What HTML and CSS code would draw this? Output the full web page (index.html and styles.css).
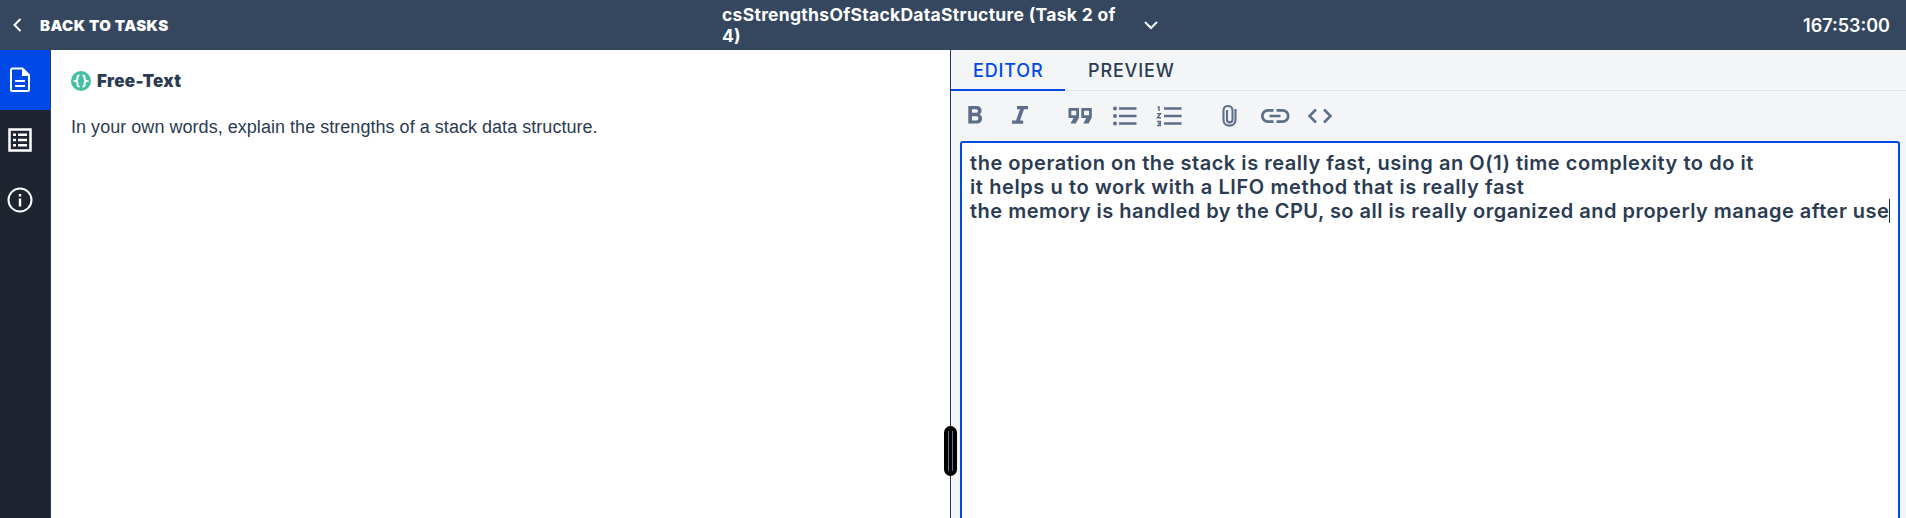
FILE: index.html
```html
<!DOCTYPE html>
<html lang="en">
<head>
<meta charset="utf-8">
<title>csStrengthsOfStackDataStructure</title>
<link rel="stylesheet" href="styles.css">
</head>
<body>
<div class="app">
  <header class="topbar">
    <a class="back">
      <svg class="back-icon" width="10" height="16" viewBox="0 0 10 16"><path d="M8.500 2 2.500 8l6 6" fill="none" stroke="#fff" stroke-width="2"/></svg>
      <span class="back-label">BACK TO TASKS</span>
    </a>
    <div class="task-picker">
      <div class="task-name"><span class="task-line">csStrengthsOfStackDataStructure (Task 2 of</span> <span class="task-rest">4)</span></div>
      <svg width="16" height="10" viewBox="0 0 16 10"><path d="m2 2 6 6 6-6" fill="none" stroke="#fff" stroke-width="2"/></svg>
    </div>
    <div class="timer">167:53:00</div>
  </header>
  <main class="workspace">
    <nav class="rail">
      <a class="rail-item active"><svg width="40" height="60" viewBox="0 0 40 60"><path d="M12.500 18.500h10l6.500 6.500v14.500a1.500 1.500 0 0 1-1.500 1.500h-15a1.500 1.500 0 0 1-1.500-1.500V20a1.500 1.500 0 0 1 1.500-1.500z" fill="none" stroke="#fff" stroke-width="2"/><path d="M22 18v8h8zM15 30h10v2H15zM15 35h10v2H15z" fill="#fff"/></svg></a>
      <a class="rail-item"><svg width="40" height="60" viewBox="0 0 40 60"><rect x="9.500" y="19.500" width="21" height="21" fill="none" stroke="#fff" stroke-width="2.500"/><path d="M13 23.500h3v2.500h-3zM18 23.500h9v2.500h-9zM13 28.700h3v2.500h-3zM18 28.700h9v2.500h-9zM13 34h3v2.500h-3zM18 34h9v2.500h-9z" fill="#fff"/></svg></a>
      <a class="rail-item"><svg width="40" height="60" viewBox="0 0 40 60"><circle cx="20" cy="30" r="11.500" fill="none" stroke="#fff" stroke-width="2"/><path d="M18.800 24h2.400v2.400h-2.400zM18.800 28.500h2.400v8h-2.400z" fill="#fff"/></svg></a>
    </nav>
    <section class="prompt">
      <div class="prompt-head">
        <svg width="20" height="20" viewBox="0 0 20 20"><circle cx="10" cy="10" r="10" fill="#45bfa1"/><path d="M8.500 4.500C6 4.500 6.500 6 6.500 7.500S6 9.500 4.500 10c1.500.5 2 1 2 2.500s-.5 3 2 3M11.500 4.500c2.500 0 2 1.500 2 3s.5 2 2 2.500c-1.500.5-2 1-2 2.500s.5 3-2 3" fill="none" stroke="#fff" stroke-width="2"/></svg>
        <h1 class="prompt-title">Free-Text</h1>
      </div>
      <p class="prompt-text">In your own words, explain the strengths of a stack data structure.</p>
    </section>
    <section class="editor">
      <div class="tabs"><a class="tab tab-editor">EDITOR</a><a class="tab tab-preview">PREVIEW</a></div>
      <div class="toolbar">
        <svg width="400" height="50" viewBox="951 91 400 50" fill="#5d6f88">
          <path fill-rule="evenodd" d="M968.300 106h8.300c3.200 0 5 1.800 5 4.500 0 1.800-.8 3-2 3.800 1.500.8 2.500 2.200 2.500 4.100 0 3.100-2.100 5.200-5.300 5.200h-8.500zM972 109.200v3.600h4c2.600 0 2.600-3.600 0-3.600zM972 116.200v4.200h4.300c2.800 0 2.800-4.200 0-4.200z"/>
          <path d="M1017 106h11v3.200h-4l-4 11.300h3.200v3.200H1012v-3.200h4l4-11.300h-3z"/>
          <path fill-rule="evenodd" d="M1068.500 108h10.500v9.500l-3.200 6h-5.300l3-5.500h-5zM1071.300 110.800v4.500h4.900v-4.500zM1081.300 108h10.500v9.500l-3.200 6h-5.300l3-5.500h-5zM1084.100 110.800v4.500h4.900v-4.500z"/>
          <circle cx="1115" cy="108.500" r="2"/><circle cx="1115" cy="116" r="2"/><circle cx="1115" cy="123.500" r="2"/>
          <path d="M1119 107.300h17.500v2.500H1119zM1119 114.800h17.500v2.500H1119zM1119 122.300h17.500v2.500H1119zM1164 107.300h17.500v2.500H1164zM1164 114.800h17.500v2.500H1164zM1164 122.300h17.500v2.500H1164z"/>
          <path d="M1157.500 107h1.500v4M1157 113.800h3.500l-3 4h3.500M1157 121.500h3.300v4H1157M1158 123.500h2.300" fill="none" stroke="#5d6f88" stroke-width="1.500"/>
          <path d="M1235.500 109v11c0 7.500-12 7.500-12 0v-9.500c0-6 9-6 9 0v9c0 3.800-5.500 3.800-5.500 0V110" fill="none" stroke="#5d6f88" stroke-width="2.100"/>
          <path d="M1273.500 110.300h-5.500a5.700 5.700 0 0 0 0 11.400h5.500M1276.500 110.300h6a5.700 5.700 0 0 1 0 11.400h-6M1269.500 116h11" fill="none" stroke="#5d6f88" stroke-width="2.700"/>
          <path d="m1316 109.500-6.500 6.500 6.500 6.500M1324 109.500l6.500 6.500-6.500 6.500" fill="none" stroke="#5d6f88" stroke-width="2.500"/>
        </svg>
      </div>
      <div class="answer">
        <div class="answer-line l1">the operation on the stack is really fast, using an O(1) time complexity to do it</div>
        <div class="answer-line l2">it helps u to work with a LIFO method that is really fast</div>
        <div class="answer-line l3">the memory is handled by the CPU, so all is really organized and properly manage after use<i class="caret"></i></div>
      </div>
      <div class="handle"></div>
    </section>
  </main>
</div>
</body>
</html>
```

FILE: styles.css
```css
* { box-sizing: border-box; }
body { margin: 0; font-family: Inter, "Liberation Sans", sans-serif; color: #2b3b52; background: #fff; }
.app { height: 518px; display: flex; flex-direction: column; overflow: hidden; }
.topbar { height: 50px; flex: none; display: grid; grid-template-columns: 722px 1fr auto; align-items: center; background: #34475e; color: #fff; padding-right: 16px; }
.back { display: flex; align-items: center; gap: 18px; padding-left: 12px; }
.back-label { font-size: 15px; font-weight: 900; letter-spacing: 0.45px; white-space: nowrap; }
.task-picker { display: flex; align-items: center; }
.task-name { width: 421px; font-size: 17.5px; line-height: 21px; font-weight: 700; letter-spacing: 0.29px; }
.task-line { white-space: nowrap; display: block; }
.timer { font-size: 18px; font-weight: 600; padding-top: 1px; }
.workspace { flex: 1; min-height: 0; display: grid; grid-template-columns: 51px 899px 1fr; }
.rail { background: #1e2530; border-right: 1px solid #2b3b52; }
.rail-item { display: block; height: 60px; }
.rail-item svg { display: block; }
.rail-item.active { background: #0049e6; }
.prompt { padding: 21px 20px; }
.prompt-head { display: flex; align-items: center; gap: 6px; height: 20px; }
.prompt-title { margin: 0; font-size: 17px; font-weight: 900; letter-spacing: 0.3px; }
.prompt-text { margin: 24px 0 0; font: 18px/24px "Liberation Sans", sans-serif; letter-spacing: 0.035px; white-space: nowrap; }
.editor { position: relative; display: flex; flex-direction: column; min-width: 0; background: #f4f5f7; border-left: 1px solid #2b3b52; padding-right: 6px; }
.tabs { display: flex; height: 41px; margin-right: -6px; border-bottom: 1px solid #e0e3e6; font-size: 18px; line-height: 42px; font-weight: 500; letter-spacing: 0.85px; }
.tab { height: 41px; padding-left: 22px; white-space: nowrap; }
.tab-editor { width: 114px; color: #0049e6; border-bottom: 2px solid #0049e6; }
.tab-preview { padding-left: 23px; }
.toolbar { height: 50px; }
.toolbar svg { display: block; }
.answer { flex: 1; margin-left: 9px; background: #fff; border: 2px solid #0049e6; border-bottom: 0; border-radius: 3px 3px 0 0; padding: 8px 0 0 8px; font-size: 20px; line-height: 24px; font-weight: 600; }
.answer-line { white-space: nowrap; height: 24px; }
.l1 { letter-spacing: 0.53px; }
.l2 { letter-spacing: 0.6px; }
.l3 { letter-spacing: 0.485px; }
.caret { display: inline-block; width: 1px; height: 24px; background: #1c2a3c; vertical-align: top; }
.handle { position: absolute; left: -7px; top: 376px; width: 13px; height: 50px; border-radius: 7px; background: linear-gradient(#5d7290, #5d7290) 4px 5px / 1px 40px no-repeat, linear-gradient(#5d7290, #5d7290) 8px 5px / 1px 40px no-repeat, #000; }
```
